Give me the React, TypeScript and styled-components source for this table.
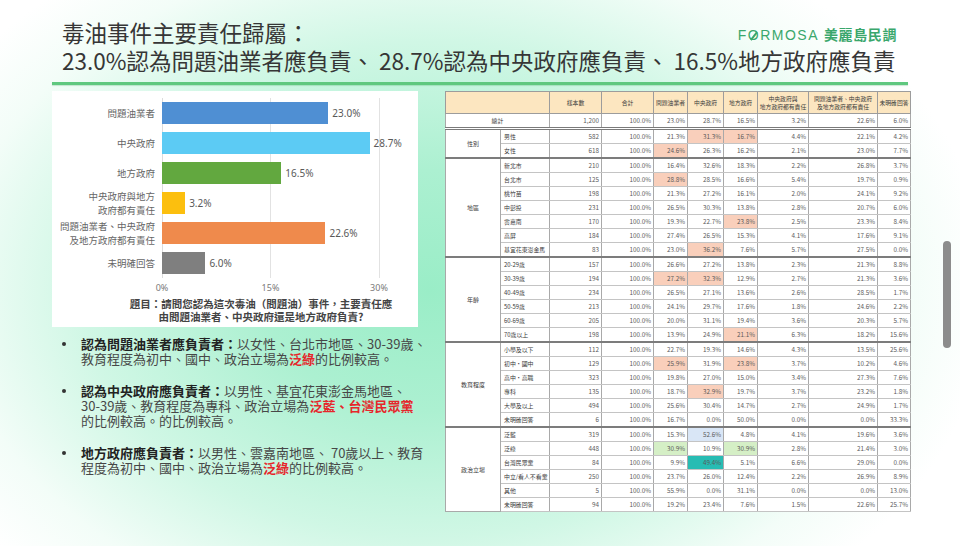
import React from "react";
import styled, { createGlobalStyle } from "styled-components";

const GlobalStyle = createGlobalStyle`
  html, body { margin: 0; padding: 0; background: #ffffff; }
  body { font-family: "Noto Sans CJK TC", "Noto Sans", sans-serif; }
`;

const Page = styled.div`
  position: relative;
  width: 960px;
  height: 546px;
  overflow: hidden;
  background:
    radial-gradient(ellipse 560px 400px at 430px 290px, #9aedc7 0%, #acf0d1 30%, #d0f7e5 62%, #f3fdf8 85%, #ffffff 100%);
`;

const Header = styled.header`
  padding: 18px 63px 0 62px;
`;

const TitleTop = styled.div`
  display: flex;
  justify-content: space-between;
  align-items: flex-start;
`;

const Title = styled.div`
  font-size: 22.5px;
  line-height: 28px;
  color: #363636;
  white-space: nowrap;
`;

const Logo = styled.div`
  display: flex;
  align-items: baseline;
  gap: 5px;
  margin-top: 8px;
  color: #3aa76c;
  white-space: nowrap;
`;

const LogoWord = styled.span`
  font-family: "Liberation Sans", Arial, sans-serif;
  font-size: 14px;
  letter-spacing: 1.5px;
  line-height: 16px;
`;

const LogoO = styled.span`
  position: relative;
  display: inline-block;
  &::after {
    content: "";
    position: absolute;
    left: 42%;
    top: 22%;
    width: 1.6px;
    height: 62%;
    background: currentColor;
    transform: rotate(38deg);
  }
`;

const LogoCn = styled.span`
  font-size: 14px;
  font-weight: 700;
  letter-spacing: 0.6px;
  line-height: 16px;
`;

const Rule = styled.div`
  margin: 8px 52px 0;
  height: 3px;
  background: #5fc87f;
  box-shadow: 0 1px 1px rgba(60, 160, 90, 0.25);
`;

const Main = styled.main`
  display: flex;
  align-items: flex-start;
  gap: 27px;
  padding: 6px 0 0 52px;
`;

const LeftCol = styled.div`
  width: 366px;
  flex-shrink: 0;
`;

const ChartPanel = styled.section`
  width: 366px;
  height: 236px;
  box-sizing: border-box;
  background: #ffffff;
  padding-top: 7px;
`;

const Bars = styled.div`
  background:
    linear-gradient(#dcdcdc, #dcdcdc) 110px 0 / 1px 100% no-repeat,
    linear-gradient(#e2e2e2, #e2e2e2) 218px 0 / 1px 100% no-repeat,
    linear-gradient(#e2e2e2, #e2e2e2) 327px 0 / 1px 100% no-repeat;
`;

const BarRow = styled.div`
  display: grid;
  grid-template-columns: 103px 1fr;
  column-gap: 7px;
  height: 30px;
  align-items: center;
`;

const BarLabel = styled.div`
  text-align: right;
  font-size: 9.5px;
  line-height: 14px;
  color: #666666;
  white-space: nowrap;
`;

const BarCell = styled.div`
  display: flex;
  align-items: center;
  gap: 4px;
`;

const Bar = styled.div<{ $color: string }>`
  height: 22px;
  background: ${(p) => p.$color};
`;

const BarValue = styled.span`
  font-family: "Noto Sans", sans-serif;
  font-size: 10px;
  color: #595959;
`;

const Axis = styled.div`
  display: flex;
  justify-content: space-between;
  width: 217px;
  margin: 4px 0 0 110px;
  height: 12px;
`;

const Tick = styled.span`
  width: 0;
  display: flex;
  justify-content: center;
  font-family: "Noto Sans", sans-serif;
  font-size: 9px;
  line-height: 12px;
  color: #7a7a7a;
  white-space: nowrap;
`;

const Caption = styled.div`
  margin-top: 3px;
  padding-left: 52px;
  text-align: center;
  font-size: 10.5px;
  line-height: 13px;
  font-weight: 700;
  color: #444444;
  white-space: nowrap;
`;

const Bullets = styled.ul`
  list-style: none;
  margin: 9px 0 0;
  padding: 0 0 0 10px;
  display: flex;
  flex-direction: column;
  gap: 17px;
`;

const Bullet = styled.li`
  display: grid;
  grid-template-columns: 19px auto;
  font-size: 13px;
  line-height: 15px;
  color: #474747;
  white-space: nowrap;
  &::before {
    content: "";
    width: 4px;
    height: 4px;
    border-radius: 50%;
    background: #333333;
    margin-top: 6px;
  }
`;

const Strong = styled.b`
  color: #222222;
  font-weight: 700;
`;

const Red = styled.b`
  color: #e6262b;
  font-weight: 700;
`;

const Table = styled.table`
  width: 465px;
  flex-shrink: 0;
  border-collapse: collapse;
  table-layout: fixed;
  background: #ffffff;
  border: 1px solid #8a8a8a;
  font-size: 6.3px;
  color: #5a5a5a;
`;

const Th = styled.th`
  height: 21px;
  padding: 0;
  background: #fce6c0;
  border: 1px solid #9c9c9c;
  font-weight: 400;
  font-size: 5.8px;
  color: #3a3a3a;
  line-height: 8px;
  text-align: center;
  vertical-align: middle;
  white-space: nowrap;
`;

const TotalBody = styled.tbody`
  border-bottom: 3px double #7a7a7a;
`;

const GroupBody = styled.tbody`
  border-top: 2px solid #7c7c7c;
`;

const Td = styled.td<{ $hl?: string; $align?: string }>`
  height: 13px;
  padding: 0 ${(p) => (p.$align === "left" ? "1px 0 3px" : "2px")};
  border: 1px solid #c4c4c4;
  border-left-color: #a9a9a9;
  border-right-color: #a9a9a9;
  text-align: ${(p) => p.$align || "right"};
  vertical-align: middle;
  line-height: 8px;
  white-space: nowrap;
  overflow: hidden;
  font-size: ${(p) => (p.$align ? "5.9px" : "6.3px")};
  background: ${(p) => p.$hl || "transparent"};
  color: ${(p) => (p.$align ? "#3a3a3a" : "#5a5a5a")};
`;

const GroupTd = styled.td`
  padding: 0;
  border: 1px solid #a9a9a9;
  text-align: center;
  vertical-align: middle;
  color: #3a3a3a;
  font-size: 6px;
  line-height: 8px;
`;

const ScrollThumb = styled.div`
  position: absolute;
  right: 9px;
  top: 241px;
  width: 8px;
  height: 107px;
  border-radius: 4px;
  background: #8c8c8c;
`;

const bars = [
  { label: ["問題油業者"], value: 23.0, color: "#4f8fd3" },
  { label: ["中央政府"], value: 28.7, color: "#5ccbf4" },
  { label: ["地方政府"], value: 16.5, color: "#62a83f" },
  { label: ["中央政府與地方", "政府都有責任"], value: 3.2, color: "#fcbf0e" },
  { label: ["問題油業者、中央政府", "及地方政府都有責任"], value: 22.6, color: "#ef8a4c" },
  { label: ["未明確回答"], value: 6.0, color: "#7f7f7f" },
];

const HL: Record<string, string> = {
  p: "#f9cfbb",
  b: "#d9e6f6",
  g: "#d5efc6",
  t: "#27bcb3",
};

type Row = [string, string, string[], string?];

const groups: { name: string; rows: Row[] }[] = [
  {
    name: "性別",
    rows: [
      ["男性", "582", ["21.3%", "31.3%", "16.7%", "4.4%", "22.1%", "4.2%"], "-pp---"],
      ["女性", "618", ["24.6%", "26.3%", "16.2%", "2.1%", "23.0%", "7.7%"], "p-----"],
    ],
  },
  {
    name: "地區",
    rows: [
      ["新北市", "210", ["16.4%", "32.6%", "18.3%", "2.2%", "26.8%", "3.7%"]],
      ["台北市", "125", ["28.8%", "28.5%", "16.6%", "5.4%", "19.7%", "0.9%"], "p-----"],
      ["桃竹苗", "198", ["21.3%", "27.2%", "16.1%", "2.0%", "24.1%", "9.2%"]],
      ["中彰投", "231", ["26.5%", "30.3%", "13.8%", "2.8%", "20.7%", "6.0%"]],
      ["雲嘉南", "170", ["19.3%", "22.7%", "23.8%", "2.5%", "23.3%", "8.4%"], "--p---"],
      ["高屏", "184", ["27.4%", "26.5%", "15.3%", "4.1%", "17.6%", "9.1%"]],
      ["基宜花東澎金馬", "83", ["23.0%", "36.2%", "7.6%", "5.7%", "27.5%", "0.0%"], "-p----"],
    ],
  },
  {
    name: "年齡",
    rows: [
      ["20-29歲", "157", ["26.6%", "27.2%", "13.8%", "2.3%", "21.3%", "8.8%"]],
      ["30-39歲", "194", ["27.2%", "32.3%", "12.9%", "2.7%", "21.3%", "3.6%"], "pp----"],
      ["40-49歲", "234", ["26.5%", "27.1%", "13.6%", "2.6%", "28.5%", "1.7%"]],
      ["50-59歲", "213", ["24.1%", "29.7%", "17.6%", "1.8%", "24.6%", "2.2%"]],
      ["60-69歲", "205", ["20.0%", "31.1%", "19.4%", "3.6%", "20.3%", "5.7%"]],
      ["70歲以上", "198", ["13.9%", "24.9%", "21.1%", "6.3%", "18.2%", "15.6%"], "--p---"],
    ],
  },
  {
    name: "教育程度",
    rows: [
      ["小學及以下", "112", ["22.7%", "19.3%", "14.6%", "4.3%", "13.5%", "25.6%"]],
      ["初中・國中", "129", ["25.9%", "31.9%", "23.8%", "3.7%", "10.2%", "4.6%"], "p-p---"],
      ["高中・高職", "323", ["19.8%", "27.0%", "15.0%", "3.4%", "27.3%", "7.6%"]],
      ["專科", "135", ["18.7%", "32.9%", "19.7%", "3.7%", "23.2%", "1.8%"], "-p----"],
      ["大學及以上", "494", ["25.6%", "30.4%", "14.7%", "2.7%", "24.9%", "1.7%"]],
      ["未明確回答", "6", ["16.7%", "0.0%", "50.0%", "0.0%", "0.0%", "33.3%"]],
    ],
  },
  {
    name: "政治立場",
    rows: [
      ["泛藍", "319", ["15.3%", "52.6%", "4.8%", "4.1%", "19.6%", "3.6%"], "-b----"],
      ["泛綠", "448", ["30.9%", "10.9%", "30.9%", "2.8%", "21.4%", "3.0%"], "g-g---"],
      ["台灣民眾黨", "84", ["9.9%", "49.4%", "5.1%", "6.6%", "29.0%", "0.0%"], "-t----"],
      ["中立/看人不看黨", "250", ["23.7%", "26.0%", "12.4%", "2.2%", "26.9%", "8.9%"]],
      ["其他", "5", ["55.9%", "0.0%", "31.1%", "0.0%", "0.0%", "13.0%"]],
      ["未明確回答", "94", ["19.2%", "23.4%", "7.6%", "1.5%", "22.6%", "25.7%"]],
    ],
  },
];

const colWidths = [55, 49, 52, 52, 34, 36, 34, 51, 69, 33];

const PX_PER_PCT = 217 / 30;

export default function App() {
  return (
    <Page>
      <GlobalStyle />
      <Header>
        <TitleTop>
          <Title>毒油事件主要責任歸屬：</Title>
          <Logo>
            <LogoWord>
              F<LogoO>O</LogoO>RMOSA
            </LogoWord>
            <LogoCn>美麗島民調</LogoCn>
          </Logo>
        </TitleTop>
        <Title>23.0%認為問題油業者應負責、 28.7%認為中央政府應負責、 16.5%地方政府應負責</Title>
      </Header>
      <Rule />
      <Main>
        <LeftCol>
          <ChartPanel>
            <Bars>
              {bars.map((b) => (
                <BarRow key={b.label.join("")}>
                  <BarLabel>
                    {b.label.map((l, i) => (
                      <div key={i}>{l}</div>
                    ))}
                  </BarLabel>
                  <BarCell>
                    <Bar $color={b.color} style={{ width: `${b.value * PX_PER_PCT}px` }} />
                    <BarValue>{b.value.toFixed(1)}%</BarValue>
                  </BarCell>
                </BarRow>
              ))}
            </Bars>
            <Axis>
              <Tick>0%</Tick>
              <Tick>15%</Tick>
              <Tick>30%</Tick>
            </Axis>
            <Caption>
              題目：請問您認為這次毒油（問題油）事件，主要責任應
              <br />
              由問題油業者、中央政府還是地方政府負責?
            </Caption>
          </ChartPanel>
          <Bullets>
            <Bullet>
              <div>
                <Strong>認為問題油業者應負責者：</Strong>以女性、台北市地區、30-39歲、
                <br />
                教育程度為初中、國中、政治立場為<Red>泛綠</Red>的比例較高。
              </div>
            </Bullet>
            <Bullet>
              <div>
                <Strong>認為中央政府應負責者：</Strong>以男性、基宜花東澎金馬地區、
                <br />
                30-39歲、教育程度為專科、政治立場為<Red>泛藍、台灣民眾黨</Red>
                <br />
                的比例較高。的比例較高。
              </div>
            </Bullet>
            <Bullet>
              <div>
                <Strong>地方政府應負責者：</Strong>以男性、雲嘉南地區、 70歲以上、教育
                <br />
                程度為初中、國中、政治立場為<Red>泛綠</Red>的比例較高。
              </div>
            </Bullet>
          </Bullets>
        </LeftCol>
        <Table>
          <colgroup>
            {colWidths.map((w, i) => (
              <col key={i} style={{ width: `${w}px` }} />
            ))}
          </colgroup>
          <thead>
            <tr>
              <Th colSpan={2} />
              <Th>樣本數</Th>
              <Th>合計</Th>
              <Th>問題油業者</Th>
              <Th>中央政府</Th>
              <Th>地方政府</Th>
              <Th>
                中央政府與
                <br />
                地方政府都有責任
              </Th>
              <Th>
                問題油業者、中央政府
                <br />
                及地方政府都有責任
              </Th>
              <Th>未明確回答</Th>
            </tr>
          </thead>
          <TotalBody>
            <tr>
              <Td colSpan={2} $align="center">
                總計
              </Td>
              <Td>1,200</Td>
              <Td>100.0%</Td>
              <Td>23.0%</Td>
              <Td>28.7%</Td>
              <Td>16.5%</Td>
              <Td>3.2%</Td>
              <Td>22.6%</Td>
              <Td>6.0%</Td>
            </tr>
          </TotalBody>
          {groups.map((g) => (
            <GroupBody key={g.name}>
              {g.rows.map((r, ri) => (
                <tr key={r[0] + ri}>
                  {ri === 0 && <GroupTd rowSpan={g.rows.length}>{g.name}</GroupTd>}
                  <Td $align="left">{r[0]}</Td>
                  <Td>{r[1]}</Td>
                  <Td>100.0%</Td>
                  {r[2].map((v, vi) => {
                    const code = r[3] ? r[3][vi] : "-";
                    return (
                      <Td key={vi} $hl={HL[code]}>
                        {v}
                      </Td>
                    );
                  })}
                </tr>
              ))}
            </GroupBody>
          ))}
        </Table>
      </Main>
      <ScrollThumb />
    </Page>
  );
}
